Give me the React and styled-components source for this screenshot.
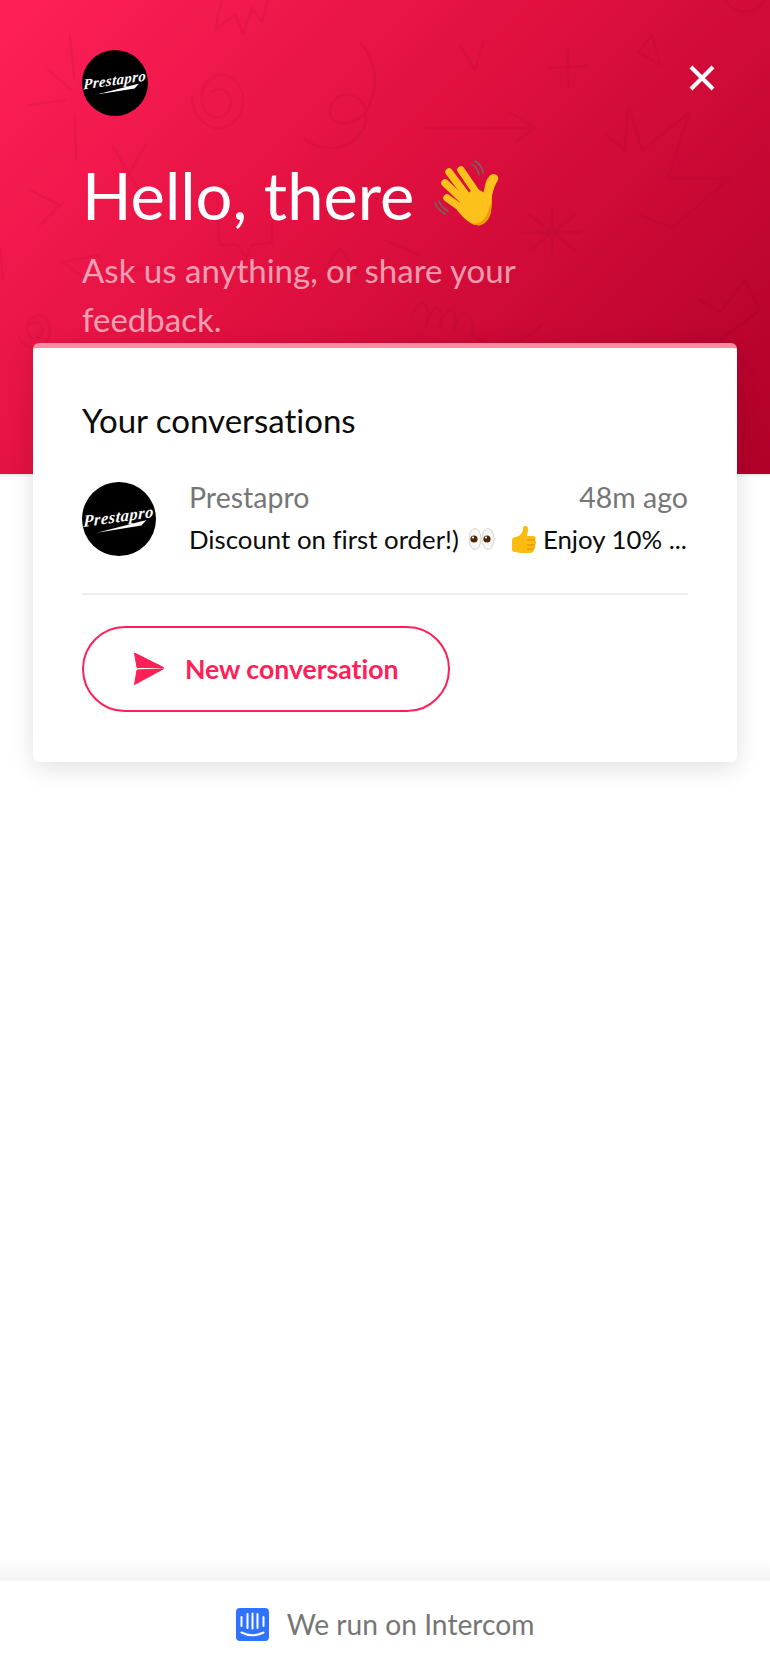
import React from 'react';
import styled, { createGlobalStyle } from 'styled-components';

const GlobalStyle = createGlobalStyle`
  html, body {
    margin: 0;
    padding: 0;
    background: #fff;
  }
  body {
    font-family: Lato, "Open Sans", sans-serif;
    font-variant-ligatures: none;
  }
`;

const Page = styled.div`
  width: 770px;
  height: 1667px;
  display: flex;
  flex-direction: column;
  overflow: hidden;
  background: #fff;
`;

const Header = styled.header`
  position: relative;
  flex: none;
  height: 474px;
  box-sizing: border-box;
  padding: 50px 55px 0 82px;
  overflow: hidden;
  background: linear-gradient(135deg, #ff2058 0%, #e0103f 45%, #b00029 100%);
  box-shadow: 0 1px 3px rgba(0, 0, 0, 0.12);
`;

const Doodles = styled.svg`
  position: absolute;
  inset: 0;
  width: 770px;
  height: 474px;
  fill: none;
  stroke: rgba(90, 0, 30, 0.06);
  stroke-width: 2.5;
  stroke-linecap: round;
  stroke-linejoin: round;
`;

const HeaderTop = styled.div`
  position: relative;
  display: flex;
  align-items: flex-start;
  justify-content: space-between;
`;

const CloseButton = styled.button`
  width: 26px;
  height: 26px;
  margin-top: 15px;
  padding: 0;
  border: 0;
  background: none;
  line-height: 0;
`;

const Title = styled.h1`
  position: relative;
  display: flex;
  align-items: center;
  margin: 37px 0 0;
  height: 84px;
  font-size: 65px;
  font-weight: 400;
  color: #fff;
`;

const WaveIcon = styled.svg`
  width: 90px;
  height: 90px;
  margin-left: 7px;
  flex: none;
`;

const Subtitle = styled.p`
  position: relative;
  width: 470px;
  margin: 9px 0 0;
  font-size: 33px;
  line-height: 49px;
  color: rgba(255, 255, 255, 0.6);
`;

const Card = styled.section`
  position: relative;
  flex: none;
  height: 419px;
  box-sizing: border-box;
  margin: -131px 33px 0;
  padding: 52px 49px 0;
  background: #fff;
  border-top: 5px solid #ff8ba3;
  border-radius: 6px;
  box-shadow: 0 6px 24px rgba(0, 0, 0, 0.12);
`;

const CardTitle = styled.h2`
  margin: 0;
  font-size: 33px;
  line-height: 40px;
  font-weight: 400;
  color: #0b0b0b;
`;

const ConversationRow = styled.div`
  display: flex;
  gap: 33px;
  margin-top: 42px;
  padding-bottom: 37px;
  border-bottom: 2px solid #eeeeee;
`;

const ConversationBody = styled.div`
  flex: 1;
  min-width: 0;
`;

const ConversationMeta = styled.div`
  display: flex;
  justify-content: space-between;
  font-size: 28.5px;
  line-height: 30px;
  color: #767676;
`;

const Message = styled.div`
  display: flex;
  align-items: center;
  margin-top: 10px;
  font-size: 25.8px;
  line-height: 34px;
  color: #0b0b0b;
  white-space: nowrap;
`;

const EmojiSvg = styled.svg`
  flex: none;
  margin-left: ${props => props.$left}px;
  margin-right: ${props => props.$right}px;
`;

const NewConversationButton = styled.button`
  display: flex;
  align-items: center;
  gap: 20px;
  width: 368px;
  height: 86px;
  box-sizing: border-box;
  margin-top: 31px;
  padding: 0 0 0 49px;
  background: #fff;
  border: 2px solid #ff2058;
  border-radius: 43px;
  font-family: inherit;
  font-variant-ligatures: none;
  font-size: 26.6px;
  font-weight: 700;
  color: #ff2058;
`;

const Footer = styled.footer`
  position: relative;
  margin-top: auto;
  flex: none;
  height: 86px;
  display: flex;
  align-items: center;
  justify-content: center;
  gap: 18px;
  background: #fff;
  font-size: 28.2px;
  color: #767676;

  &::before {
    content: '';
    position: absolute;
    left: 0;
    right: 0;
    top: -24px;
    height: 24px;
    background: linear-gradient(to bottom, rgba(245, 245, 245, 0), #f4f4f4);
  }
`;

const LogoCircle = styled.div`
  flex: none;
  width: ${props => props.$size}px;
  height: ${props => props.$size}px;
  border-radius: 50%;
  background: #000;
  display: flex;
  flex-direction: column;
  align-items: center;
  justify-content: center;
  overflow: hidden;
  font-size: ${props => props.$size * 0.225}px;
`;

const LogoInner = styled.div`
  display: flex;
  flex-direction: column;
  align-items: center;
  transform: rotate(-8deg) skewX(-10deg);
`;

const LogoText = styled.span`
  font-family: "Liberation Serif", serif;
  font-style: italic;
  font-weight: 700;
  line-height: 0.9;
  letter-spacing: 0.03em;
  color: #fff;
`;

const LogoSwoosh = styled.svg`
  display: block;
  width: 3em;
  height: 0.34em;
  margin-left: 0.4em;
`;

const Logo = ({ size }) => (
  <LogoCircle $size={size}>
    <LogoInner>
      <LogoText>Prestapro</LogoText>
      <LogoSwoosh viewBox="0 0 60 6" preserveAspectRatio="none">
        <path d="M0 6 L60 0 L54 5 Z" fill="#fff" />
      </LogoSwoosh>
    </LogoInner>
  </LogoCircle>
);

const Background = () => (
  <Doodles viewBox="0 0 770 474">
    <path d="M222 0 L215 30 L235 14 L243 34 L252 8 L262 22 L268 0" />
    <path d="M212 92 c10 -8 22 2 18 16 c-5 14 -24 12 -28 -4 c-4 -20 14 -36 30 -26 c16 10 14 40 -4 48 c-18 8 -36 -8 -36 -30" />
    <path d="M360 42 c18 20 20 50 4 72 c-14 14 -36 12 -34 -6 c4 -18 34 -18 36 4 c2 20 -14 36 -36 36 c-10 0 -20 -4 -26 -10" />
    <path d="M70 35 L74 78 M30 105 L65 100 M48 70 L72 90 M100 60 L80 85 M75 115 L76 160" />
    <path d="M424 128 L534 128 M510 112 L535 128 L515 142" />
    <path d="M568 50 L568 88 M550 68 L586 66" />
    <path d="M460 45 L475 70 L484 42" />
    <path d="M652 35 L638 52 L660 65 Z" />
    <path d="M606 135 L625 150 L628 105 L642 150 L690 112 L668 178 L730 178 L672 228 L640 215" />
    <path d="M530 215 L575 250 M575 215 L530 250 M552 208 L552 256 M522 233 L580 232" />
    <path d="M112 145 L145 200 M145 145 L115 200" />
    <path d="M218 218 L220 245 L238 245 L246 258 L252 245 L272 243 L272 222" />
    <path d="M340 248 L320 275 M340 248 L358 275" />
    <path d="M100 255 L62 262 L85 278 L160 265" />
    <path d="M385 240 L420 255" />
    <path d="M30 325 c6 -6 14 0 12 8 c-3 8 -14 6 -15 -3 c-1 -11 10 -18 18 -12 c8 7 6 22 -3 28 c-8 5 -20 0 -23 -9" />
    <path d="M412 318 c10 -30 20 -10 14 10 c6 -30 20 -24 14 0 c6 -28 20 -20 14 2 c6 -26 22 -18 18 4 c14 14 50 14 70 -10" />
    <path d="M700 300 L720 312 L745 280 L760 310 L720 340 L752 372" />
    <path d="M0 250 L3 280" />
    <path d="M30 190 L60 205 L40 225" />
    <path d="M725 0 c10 16 30 16 40 0" />
  </Doodles>
);

const WaveHand = () => (
  <WaveIcon viewBox="0 0 90 90">
    <g fill="none" strokeLinecap="round" stroke="#6d6d5e" strokeWidth="1.5">
      <path d="M51 14 Q57 18 58 25" />
      <path d="M54 11 Q61 15 62 23" />
      <path d="M14 53 Q17 60 24 64" />
      <path d="M18 51 Q20 57 27 61" />
    </g>
    <g fill="none" strokeLinecap="round" stroke="#fcc21b" strokeWidth="7.5">
      <path d="M40 20 L55 42" />
      <path d="M28 22 L46 46" />
      <path d="M24 33 L42 50" />
      <path d="M26 48 L43 60" />
    </g>
    <path d="M72 24 C76 24 78 27 77 30 C74 35 72 40 71 46 C71 56 70 66 64 72 L58 52 C62 50 62 44 64 36 C65 30 68 25 72 24 Z" fill="#fcc21b" />
    <path d="M40 50 L53 38 C60 40 66 44 70 50 C72 62 68 72 60 75 C52 77 44 70 36 60 Z" fill="#fcc21b" />
    <path d="M46 70 C52 76 62 74 66 64 C68 60 69 56 70 52 C71 62 68 72 60 75 C55 76 50 74 46 70 Z" fill="#ee9b00" />
  </WaveIcon>
);

const EyesEmoji = () => (
  <EmojiSvg $left={9} $right={0} width="27" height="24" viewBox="0 0 27 24">
    <ellipse cx="7" cy="12" rx="6" ry="10.5" fill="#f7f7f5" stroke="#d6d6d2" />
    <ellipse cx="20" cy="12" rx="6" ry="10.5" fill="#f7f7f5" stroke="#d6d6d2" />
    <circle cx="6" cy="12" r="3.6" fill="#4a2708" />
    <circle cx="19" cy="12" r="3.6" fill="#4a2708" />
    <circle cx="5" cy="10.5" r="1.1" fill="#fff" />
    <circle cx="18" cy="10.5" r="1.1" fill="#fff" />
  </EmojiSvg>
);

const ThumbEmoji = () => (
  <EmojiSvg $left={16} $right={6} width="26" height="28" viewBox="0 0 26 28">
    <path d="M1 15 C1 13 3 12 5 12 C9 11 12 8 12 3 C12 0 17 0 17 4 C17 7 16 9 16 11 L22 11 C25 11 25 14 24 15 C26 17 25 19 24 20 C25 22 24 24 23 24 C23 26 22 28 19 28 L10 28 C7 28 6 27 4 27 C2 27 1 26 1 24 Z" fill="#fbbc12" />
    <path d="M16 15 L24 15 M16 20 L24 20 M16 24 L23 24" stroke="#e08c00" strokeWidth="1.2" fill="none" />
  </EmojiSvg>
);

const SendIcon = () => (
  <svg width="32" height="34" viewBox="0 0 32 34" style={{ flex: 'none' }}>
    <g fill="#ff2058" stroke="#ff2058" strokeWidth="1" strokeLinejoin="round">
      <path d="M1.5 1 L30.5 15.5 L4 15.5 Z" />
      <path d="M4 18 L30.5 16.8 L1.5 32.5 Z" />
    </g>
  </svg>
);

const IntercomLogo = () => (
  <svg width="33" height="33" viewBox="0 0 33 33" style={{ flex: 'none' }}>
    <rect width="33" height="33" rx="4" fill="#2e72ff" />
    <g stroke="#fff" strokeWidth="2" strokeLinecap="round" fill="none">
      <path d="M5.5 9 L5.5 18 M11.5 6 L11.5 20 M16.5 5.5 L16.5 20.5 M21.5 6 L21.5 20 M27.5 9 L27.5 18" />
      <path d="M5.5 24.5 Q16.5 30 27.5 24.5" />
    </g>
  </svg>
);

const App = () => {
  return (
    <Page>
      <GlobalStyle />
      <Header>
        <Background />
        <HeaderTop>
          <Logo size={66} />
          <CloseButton aria-label="Close">
            <svg width="26" height="26" viewBox="0 0 26 26">
              <path d="M2 2 L24 24 M24 2 L2 24" stroke="#fff" strokeWidth="4" fill="none" />
            </svg>
          </CloseButton>
        </HeaderTop>
        <Title>
          Hello, there
          <WaveHand />
        </Title>
        <Subtitle>Ask us anything, or share your feedback.</Subtitle>
      </Header>
      <Card>
        <CardTitle>Your conversations</CardTitle>
        <ConversationRow>
          <Logo size={74} />
          <ConversationBody>
            <ConversationMeta>
              <span>Prestapro</span>
              <span>48m ago</span>
            </ConversationMeta>
            <Message>
              Discount on first order!)
              <EyesEmoji />
              <ThumbEmoji />
              Enjoy 10% ...
            </Message>
          </ConversationBody>
        </ConversationRow>
        <NewConversationButton>
          <SendIcon />
          New conversation
        </NewConversationButton>
      </Card>
      <Footer>
        <IntercomLogo />
        We run on Intercom
      </Footer>
    </Page>
  );
};

export default App;
